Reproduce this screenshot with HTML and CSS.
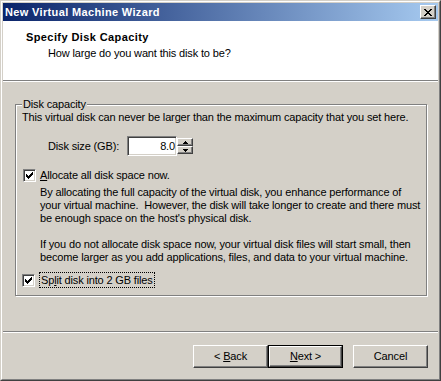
FILE: index.html
```html
<!DOCTYPE html>
<html>
<head>
<meta charset="utf-8">
<link rel="stylesheet" href="styles.css">
</head>
<body>
<div class="window">
  <div class="frame">
    <div class="titlebar">
      <span class="title">New Virtual Machine Wizard</span>
      <div class="close">
        <svg width="8" height="7" viewBox="0 0 8 7" shape-rendering="crispEdges">
          <path d="M0 0h2v1H0zM6 0h2v1H6zM1 1h2v1H1zM5 1h2v1H5zM2 2h4v1H2zM3 3h2v1H3zM2 4h4v1H2zM1 5h2v1H1zM5 5h2v1H5zM0 6h2v1H0zM6 6h2v1H6z" fill="#000"/>
        </svg>
      </div>
    </div>
    <div class="header">
      <div class="h-title">Specify Disk Capacity</div>
      <div class="h-sub">How large do you want this disk to be?</div>
    </div>
    <div class="sep"></div>
    <div class="content">
      <fieldset class="group">
        <legend>Disk capacity</legend>
        <p class="intro">This virtual disk can never be larger than the maximum capacity that you set here.</p>
        <div class="sizerow">
          <span class="sizelabel">Disk size (GB):</span>
          <div class="spin">
            <div class="edit">8.0</div>
            <div class="spinbtns">
              <div class="sb"><svg width="5" height="3" viewBox="0 0 5 3" shape-rendering="crispEdges"><path d="M2 0h1v1H2zM1 1h3v1H1zM0 2h5v1H0z" fill="#000"/></svg></div>
              <div class="sb"><svg width="5" height="3" viewBox="0 0 5 3" shape-rendering="crispEdges"><path d="M0 0h5v1H0zM1 1h3v1H1zM2 2h1v1H2z" fill="#000"/></svg></div>
            </div>
          </div>
        </div>
        <div class="checkrow first">
          <span class="cb"><svg width="7" height="7" viewBox="0 0 7 7" shape-rendering="crispEdges"><path d="M6 0h1v1H6zM5 1h2v1H5zM0 2h1v1H0zM4 2h3v1H4zM0 3h2v1H0zM3 3h3v1H3zM0 4h5v1H0zM1 5h3v1H1zM2 6h1v1H2z" fill="#000"/></svg></span>
          <span class="cblabel"><u>A</u>llocate all disk space now.</span>
        </div>
        <div class="desc">
          <p>By allocating the full capacity of the virtual disk, you enhance performance of<br>your virtual machine.&nbsp; However, the disk will take longer to create and there must<br>be enough space on the host's physical disk.</p>
          <p>If you do not allocate disk space now, your virtual disk files will start small, then<br>become larger as you add applications, files, and data to your virtual machine.</p>
        </div>
        <div class="checkrow second">
          <span class="cb"><svg width="7" height="7" viewBox="0 0 7 7" shape-rendering="crispEdges"><path d="M6 0h1v1H6zM5 1h2v1H5zM0 2h1v1H0zM4 2h3v1H4zM0 3h2v1H0zM3 3h3v1H3zM0 4h5v1H0zM1 5h3v1H1zM2 6h1v1H2z" fill="#000"/></svg></span>
          <span class="cblabel focus">Sp<u>l</u>it disk into 2 GB files</span>
        </div>
      </fieldset>
    </div>
    <div class="sep"></div>
    <div class="buttons">
      <div class="btn"><span>&lt; <u>B</u>ack</span></div>
      <div class="btn default"><span class="inner"><span><u>N</u>ext &gt;</span></span></div>
      <div class="btn cancel"><span>Cancel</span></div>
    </div>
  </div>
</div>
</body>
</html>
```

FILE: styles.css
```css
* { box-sizing: border-box; }
html, body {
  margin: 0;
  width: 441px;
  height: 381px;
  overflow: hidden;
  background: #d4d0c8;
}
body {
  font-family: "Liberation Sans", Arial, sans-serif;
  font-size: 11px;
  line-height: 13px;
  letter-spacing: -0.15px;
  color: #000;
}
.window {
  width: 441px;
  height: 381px;
  border: 1px solid;
  border-color: #d4d0c8 #404040 #404040 #d4d0c8;
  background: #d4d0c8;
}
.frame {
  height: 100%;
  border: 1px solid;
  border-color: #fff #808080 #808080 #fff;
  padding: 1px;
  display: flex;
  flex-direction: column;
}
.titlebar {
  height: 18px;
  flex: none;
  background: linear-gradient(to right, #0a246a, #a6caf0);
  display: flex;
  align-items: center;
  justify-content: space-between;
  padding: 0 2px 0 2px;
}
.title {
  color: #fff;
  font-weight: bold;
  font-size: 11px;
  letter-spacing: 0.35px;
}
.close {
  width: 16px;
  height: 14px;
  background: #d4d0c8;
  border: 1px solid;
  border-color: #fff #404040 #404040 #fff;
  box-shadow: inset -1px -1px #808080;
  display: flex;
  align-items: center;
  justify-content: center;
  padding-right: 1px;
}
.close svg { display: block; }
.header {
  height: 59px;
  flex: none;
  background: #fff;
  padding: 10px 0 0 23px;
}
.h-title { font-weight: bold; letter-spacing: 0.4px; }
.h-sub { margin: 3px 0 0 22px; }
.sep {
  height: 2px;
  flex: none;
  border-top: 1px solid #808080;
  border-bottom: 1px solid #fff;
}
.content {
  height: 249px;
  flex: none;
  padding: 16px 12px 0 12px;
}
.group {
  margin: 0;
  width: 411px;
  height: 198px;
  border: 1px solid #808080;
  box-shadow: inset 1px 1px #fff, 1px 1px #fff;
  padding: 0 6px 0 6px;
}
.group legend {
  padding: 0 1px;
  margin: 0;
  background: #d4d0c8;
  line-height: 13px;
}
.intro { margin: 0; white-space: nowrap; }
.sizerow {
  display: flex;
  align-items: center;
  margin-top: 12px;
  height: 20px;
}
.sizelabel { margin-left: 26px; width: 79px; }
.spin { display: flex; }
.edit {
  width: 50px;
  height: 20px;
  background: #fff;
  border: 1px solid;
  border-color: #808080 #fff #fff #808080;
  box-shadow: inset 1px 1px #404040, inset -1px -1px #d4d0c8;
  text-align: right;
  padding: 3px 1px 0 0;
}
.spinbtns {
  display: flex;
  flex-direction: column;
  height: 20px;
  width: 16px;
  border-top: 2px solid #d4d0c8;
  border-bottom: 2px solid #d4d0c8;
}
.sb {
  flex: 1;
  background: #d4d0c8;
  border: 1px solid;
  border-color: #fff #404040 #404040 #fff;
  box-shadow: inset -1px -1px #808080;
  display: flex;
  align-items: center;
  justify-content: center;
}
.sb svg { display: block; }
.checkrow {
  display: flex;
  align-items: center;
  gap: 4px;
  height: 13px;
}
.checkrow.first { margin-top: 13px; margin-left: 1px; }
.checkrow.second { margin-top: 9px; height: 14px; }
.cb {
  width: 13px;
  height: 13px;
  flex: none;
  background: #fff;
  border: 1px solid;
  border-color: #808080 #fff #fff #808080;
  box-shadow: inset 1px 1px #404040, inset -1px -1px #d4d0c8;
  display: flex;
  padding: 2px 0 0 2px;
}
.cb svg { display: block; }
.checkrow.second .cb { margin-right: 1px; }
.cblabel.focus {
  outline: 1px dotted #000;
  outline-offset: 0;
  padding: 0 1px;
  height: 14px;
  line-height: 14px;
}
.desc {
  margin: 4px 0 0 18px;
  white-space: nowrap;
}
.desc p { margin: 0 0 13px 0; }
.desc p:last-child { margin-bottom: 0; }
.buttons {
  flex: 1;
  display: flex;
  justify-content: flex-end;
  align-items: flex-start;
  padding: 12px 10px 0 0;
}
.btn {
  width: 75px;
  height: 23px;
  background: #d4d0c8;
  border: 1px solid;
  border-color: #fff #404040 #404040 #fff;
  box-shadow: inset -1px -1px #808080;
  display: flex;
  align-items: center;
  justify-content: center;
  white-space: pre;
}
.btn.default {
  border: 1px solid #000;
  box-shadow: none;
  padding: 0;
}
.btn.default .inner {
  width: 100%;
  height: 100%;
  border: 1px solid;
  border-color: #fff #404040 #404040 #fff;
  box-shadow: inset -1px -1px #808080;
  display: flex;
  align-items: center;
  justify-content: center;
}
.btn.cancel { margin-left: 10px; }
```
